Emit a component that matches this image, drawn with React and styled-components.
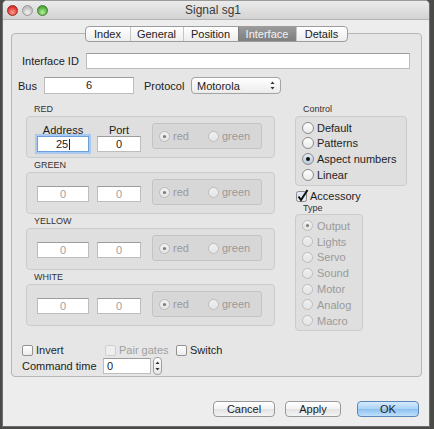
import React from "react";
import styled, { createGlobalStyle, css } from "styled-components";

const GlobalStyle = createGlobalStyle`
  html, body {
    margin: 0;
    padding: 0;
    background: #4a4a46;
  }
  body {
    font-family: "Liberation Sans", Arial, sans-serif;
    font-size: 11px;
    color: #222;
  }
  * { box-sizing: border-box; }
`;

const Window = styled.div`
  margin-left: 2px;
  width: 428px;
  height: 427px;
  background: #ededed;
  border: 1px solid #6f6f6f;
  border-top-color: #9a9a9a;
  border-radius: 5px 5px 0 0;
  display: flex;
  flex-direction: column;
  overflow: hidden;
`;

const TitleBar = styled.div`
  position: relative;
  height: 19px;
  flex: none;
  display: flex;
  align-items: center;
  padding-left: 4px;
  background: linear-gradient(#ebebeb, #d3d3d3);
  border-bottom: 1px solid #b3b3b3;
`;

const Lights = styled.div`
  display: flex;
  gap: 4px;
`;

const Light = styled.span`
  width: 11px;
  height: 11px;
  border-radius: 50%;
  border: 1px solid ${(p) => p.$edge};
  background: radial-gradient(circle at 50% 70%, ${(p) => p.$hi} 0%, ${(p) => p.$color} 70%);
`;

const Title = styled.div`
  flex: 1;
  text-align: center;
  margin-right: 51px;
  font-size: 12px;
  color: #3a3a3a;
`;

const Tabs = styled.div`
  position: relative;
  z-index: 1;
  align-self: center;
  margin: 6px 0 -9px 0;
  display: flex;
  height: 16px;
  border: 1px solid #9d9d9d;
  border-radius: 4px;
  overflow: hidden;
  background: linear-gradient(#ffffff, #ededed);
`;

const Tab = styled.div`
  width: ${(p) => p.$w}px;
  text-align: center;
  line-height: 14px;
  font-size: 11px;
  color: #222;
  border-left: 1px solid #c6c6c6;
  &:first-child { border-left: none; }
  ${(p) =>
    p.$active &&
    css`
      background: linear-gradient(#9a9a9a, #7e7e7e);
      color: #f4f4f4;
      border-left-color: #7a7a7a;
    `}
`;

const Pane = styled.div`
  margin: 0 7px 0 8px;
  height: 344px;
  flex: none;
  background: #e6e6e6;
  border: 1px solid #b6b6b6;
  border-radius: 4px;
  padding: 19px 11px 0 6px;
  display: flex;
  flex-direction: column;
`;

const FormRow = styled.div`
  display: flex;
  align-items: center;
  padding-left: ${(p) => p.$indent || 0}px;
  margin-top: ${(p) => p.$top || 0}px;
`;

const RowLabel = styled.span`
  width: ${(p) => p.$w}px;
  flex: none;
  margin-left: ${(p) => p.$ml || 0}px;
  font-size: 11px;
  color: #222;
`;

const TextField = styled.div`
  width: ${(p) => (p.$w ? `${p.$w}px` : "auto")};
  flex: ${(p) => (p.$w ? "none" : "1")};
  height: ${(p) => p.$h || 16}px;
  background: #fff;
  border: 1px solid #bdbdbd;
  border-top-color: #9c9c9c;
  font-size: 11px;
  line-height: ${(p) => (p.$h || 16) - 2}px;
  padding: 0 3px;
  text-align: ${(p) => p.$align || "center"};
  color: ${(p) => (p.$muted ? "#a0a0a0" : "#222")};
  ${(p) =>
    p.$focus &&
    css`
      border-color: #6d9fdc;
      box-shadow: 0 0 0 2px #a9c9f0;
    `}
`;

const Caret = styled.span`
  display: inline-block;
  width: 1px;
  height: 11px;
  background: #222;
  vertical-align: -2px;
  margin-left: 1px;
`;

const Select = styled.div`
  width: 90px;
  height: 17px;
  display: flex;
  align-items: center;
  justify-content: space-between;
  padding: 0 5px 0 5px;
  border: 1px solid #a3a3a3;
  border-radius: 4px;
  background: linear-gradient(#ffffff, #ececec);
  font-size: 11px;
  color: #222;
`;

const Lower = styled.div`
  display: flex;
  align-items: flex-start;
  margin-top: 9px;
  padding-left: 8px;
`;

const LeftCol = styled.div`
  width: 249px;
  flex: none;
`;

const RightCol = styled.div`
  width: 112px;
  margin-left: 20px;
  flex: none;
`;

const GroupTitle = styled.div`
  height: ${(p) => p.$h || 13}px;
  line-height: ${(p) => p.$h || 13}px;
  padding-left: 8px;
  font-size: 9px;
  color: #333;
`;

const GroupBox = styled.div`
  height: 42px;
  margin-bottom: 1px;
  padding: 0 12px 0 10px;
  display: flex;
  align-items: flex-start;
  background: #dfdfdf;
  border: 1px solid #cbcbcb;
  border-radius: 4px;
`;

const FieldCol = styled.div`
  display: flex;
  flex-direction: column;
  align-items: center;
  margin-top: ${(p) => (p.$labelled ? 7 : 13)}px;
  margin-right: ${(p) => p.$mr || 0}px;
`;

const FieldLabel = styled.div`
  font-size: 11px;
  line-height: 12px;
  color: #222;
`;

const RadioBox = styled.div`
  width: 111px;
  height: 26px;
  margin: 6px 0 0 11px;
  padding-left: 6px;
  display: flex;
  align-items: center;
  background: #d7d7d7;
  border: 1px solid #c3c3c3;
  border-radius: 3px;
`;

const RadioItem = styled.label`
  display: flex;
  align-items: center;
  gap: ${(p) => p.$gap || 3}px;
  width: ${(p) => (p.$w ? `${p.$w}px` : "auto")};
  height: ${(p) => p.$h || 14}px;
  font-size: 11px;
  color: ${(p) => (p.$disabled ? "#9a9a9a" : "#1e1e1e")};
`;

const RadioCircle = styled.span`
  position: relative;
  flex: none;
  width: ${(p) => p.$size}px;
  height: ${(p) => p.$size}px;
  border-radius: 50%;
  border: 1px solid ${(p) => (p.$disabled ? "#bdbdbd" : "#8b8b8b")};
  background: ${(p) =>
    p.$disabled
      ? "linear-gradient(#f0f0f0, #e4e4e4)"
      : p.$checked
      ? "linear-gradient(#e4ecf5, #b9c8d8)"
      : "linear-gradient(#ffffff, #e9e9e9)"};
  &::after {
    content: "";
    display: ${(p) => (p.$checked ? "block" : "none")};
    position: absolute;
    left: 50%;
    top: 50%;
    width: ${(p) => (p.$disabled ? 3 : 4)}px;
    height: ${(p) => (p.$disabled ? 3 : 4)}px;
    margin: ${(p) => (p.$disabled ? -1.5 : -2)}px 0 0 ${(p) => (p.$disabled ? -1.5 : -2)}px;
    border-radius: 50%;
    background: ${(p) => (p.$disabled ? "#7a7a7a" : "#111")};
  }
`;

const ListBox = styled.div`
  width: ${(p) => p.$w}px;
  height: ${(p) => p.$h}px;
  padding: 3px 0 0 6px;
  background: #dfdfdf;
  border: 1px solid #cbcbcb;
  border-radius: 4px;
`;

const CheckItem = styled.label`
  display: flex;
  align-items: center;
  gap: ${(p) => p.$gap || 3}px;
  width: ${(p) => (p.$w ? `${p.$w}px` : "auto")};
  height: 14px;
  margin-left: ${(p) => p.$ml || 0}px;
  margin-top: ${(p) => p.$mt || 0}px;
  font-size: 11px;
  color: ${(p) => (p.$disabled ? "#a0a0a0" : "#1e1e1e")};
`;

const Box = styled.span`
  flex: none;
  width: 11px;
  height: 11px;
  border-radius: 2px;
  border: 1px solid ${(p) => (p.$disabled ? "#cfcfcf" : "#939393")};
  background: ${(p) => (p.$disabled ? "#eeeeee" : "linear-gradient(#ffffff, #ececec)")};
`;

const BottomBlock = styled.div`
  margin-top: 12px;
  padding-left: 4px;
`;

const Stepper = styled.div`
  width: 9px;
  height: 18px;
  margin-left: 2px;
  border: 1px solid #9e9e9e;
  border-radius: 4px;
  background: linear-gradient(#ffffff, #e6e6e6);
  display: flex;
  align-items: center;
  justify-content: center;
`;

const ButtonRow = styled.div`
  display: flex;
  justify-content: flex-end;
  margin-top: 24px;
  padding-right: 10px;
`;

const Button = styled.div`
  width: ${(p) => p.$w}px;
  height: 16px;
  margin-left: ${(p) => p.$ml || 0}px;
  text-align: center;
  line-height: 14px;
  font-size: 11px;
  color: #1e1e1e;
  border: 1px solid #999;
  border-radius: 4px;
  background: linear-gradient(#ffffff, #f2f2f2 50%, #e2e2e2 51%, #f4f4f4);
  ${(p) =>
    p.$primary &&
    css`
      border-color: #5c87b8;
      background: linear-gradient(#d6ebfc, #a9d1f5 50%, #8cc0ef 51%, #bfe0fb);
    `}
`;

const UpDown = ({ h = 9 }) => (
  <svg width="5" height={h} viewBox={`0 0 5 ${h}`}>
    <path d="M2.5 0.5 L4.5 3 L0.5 3 Z" fill="#333" />
    <path d={`M2.5 ${h - 0.5} L4.5 ${h - 3} L0.5 ${h - 3} Z`} fill="#333" />
  </svg>
);

const Checked = () => (
  <svg width="13" height="13" viewBox="0 0 13 13" style={{ flex: "none", overflow: "visible" }}>
    <rect x="0.5" y="1.5" width="10" height="10" rx="2" fill="#dfe8f2" stroke="#8a8a8a" />
    <path d="M2.5 6.5 L5 10 L11.5 0" fill="none" stroke="#111" strokeWidth="2" />
  </svg>
);

const colors = [
  { name: "RED", muted: false, labelled: true, address: "25", focus: true },
  { name: "GREEN", muted: true },
  { name: "YELLOW", muted: true },
  { name: "WHITE", muted: true },
];

const controls = ["Default", "Patterns", "Aspect numbers", "Linear"];
const types = ["Output", "Lights", "Servo", "Sound", "Motor", "Analog", "Macro"];

export default function App() {
  return (
    <>
      <GlobalStyle />
      <Window>
        <TitleBar>
          <Lights>
            <Light $color="#d8322c" $hi="#ff9c90" $edge="#a02620" />
            <Light $color="#bdbdbd" $hi="#f2f2f2" $edge="#9a9a9a" />
            <Light $color="#4ea83a" $hi="#b8f0a0" $edge="#3a7f2b" />
          </Lights>
          <Title>Signal sg1</Title>
        </TitleBar>

        <Tabs>
          <Tab $w={44}>Index</Tab>
          <Tab $w={53}>General</Tab>
          <Tab $w={55}>Position</Tab>
          <Tab $w={58} $active>Interface</Tab>
          <Tab $w={51}>Details</Tab>
        </Tabs>

        <Pane>
          <FormRow $indent={4}>
            <RowLabel $w={64}>Interface ID</RowLabel>
            <TextField />
          </FormRow>
          <FormRow $top={8}>
            <RowLabel $w={26}>Bus</RowLabel>
            <TextField $w={90} $h={17}>6</TextField>
            <RowLabel $w={47} $ml={10}>Protocol</RowLabel>
            <Select>
              <span>Motorola</span>
              <UpDown />
            </Select>
          </FormRow>

          <Lower>
            <LeftCol>
              {colors.map((c) => (
                <div key={c.name}>
                  <GroupTitle>{c.name}</GroupTitle>
                  <GroupBox>
                    <FieldCol $labelled={c.labelled} $mr={8}>
                      {c.labelled && <FieldLabel>Address</FieldLabel>}
                      <TextField $w={52} $muted={c.muted} $focus={c.focus}>
                        {c.address || "0"}
                        {c.focus && <Caret />}
                      </TextField>
                    </FieldCol>
                    <FieldCol $labelled={c.labelled}>
                      {c.labelled && <FieldLabel>Port</FieldLabel>}
                      <TextField $w={44} $muted={c.muted}>0</TextField>
                    </FieldCol>
                    <RadioBox>
                      <RadioItem $w={49} $disabled>
                        <RadioCircle $size={11} $checked $disabled />
                        red
                      </RadioItem>
                      <RadioItem $disabled>
                        <RadioCircle $size={11} $disabled />
                        green
                      </RadioItem>
                    </RadioBox>
                  </GroupBox>
                </div>
              ))}
            </LeftCol>

            <RightCol>
              <GroupTitle>Control</GroupTitle>
              <ListBox $w={112} $h={70}>
                {controls.map((c) => (
                  <RadioItem key={c} $h={15.6} $gap={3}>
                    <RadioCircle $size={12} $checked={c === "Aspect numbers"} />
                    {c}
                  </RadioItem>
                ))}
              </ListBox>
              <CheckItem $mt={3} $ml={1} $gap={1}>
                <Checked />
                Accessory
              </CheckItem>
              <GroupTitle $h={11}>Type</GroupTitle>
              <ListBox $w={68} $h={117}>
                {types.map((t) => (
                  <RadioItem key={t} $h={15.8} $gap={4} $disabled>
                    <RadioCircle $size={11} $disabled $checked={t === "Output"} />
                    {t}
                  </RadioItem>
                ))}
              </ListBox>
            </RightCol>
          </Lower>

          <BottomBlock>
            <FormRow>
              <CheckItem $w={83} $gap={3}>
                <Box />
                Invert
              </CheckItem>
              <CheckItem $w={71} $gap={3} $disabled>
                <Box $disabled />
                Pair gates
              </CheckItem>
              <CheckItem $gap={3}>
                <Box />
                Switch
              </CheckItem>
            </FormRow>
            <FormRow>
              <RowLabel $w={81}>Command time</RowLabel>
              <TextField $w={48} $align="left">0</TextField>
              <Stepper>
                <UpDown h={10} />
              </Stepper>
            </FormRow>
          </BottomBlock>
        </Pane>

        <ButtonRow>
          <Button $w={62}>Cancel</Button>
          <Button $w={56} $ml={10}>Apply</Button>
          <Button $w={62} $ml={16} $primary>OK</Button>
        </ButtonRow>
      </Window>
    </>
  );
}
